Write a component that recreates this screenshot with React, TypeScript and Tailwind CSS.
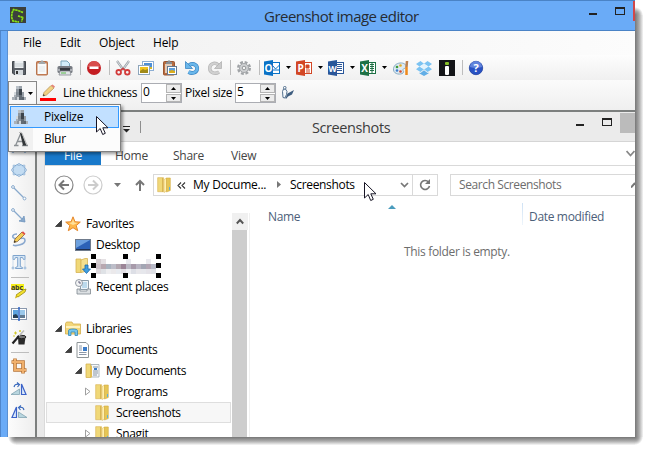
import React from "react";

type Kids = { children?: React.ReactNode };

function Ico({ children, w = 16, h = 16, c = "" }: Kids & { w?: number; h?: number; c?: string }) {
  return (
    <svg width={w} height={h} viewBox={`0 0 ${w} ${h}`} className={`block shrink-0 ${c}`}>
      {children}
    </svg>
  );
}

const Sep = ({ c = "" }: { c?: string }) => <div className={`h-[15px] w-px shrink-0 bg-[#bdbdbd] ${c}`} />;

const Caret = ({ c = "" }: { c?: string }) => (
  <Ico w={5} h={3} c={c}>
    <path d="M0 0h5L2.5 3z" fill="#000" />
  </Ico>
);

const Logo = () => (
  <Ico>
    <rect width="16" height="16" fill="#3b3f3d" />
    <path d="M13 5.500L8 3.500 3.500 2.500 2 6 1.500 10l1.500 4 6 1M8 9l5 1.500-1.500 4" fill="none" stroke="#5f9c1c" strokeWidth="1.600" />
    <path d="M13 5.500L8 3.500 3.500 2.500 2 6 1.500 10l1.500 4 6 1M8 9l5 1.500-1.500 4" fill="none" stroke="#8be01a" strokeWidth="1.500" strokeDasharray="2 1" />
  </Ico>
);

const Save = () => (
  <Ico>
    <path d="M1.5 1.5h13v13H3l-1.500-1.500z" fill="#5a5f66" stroke="#43484e" />
    <rect x="3.500" y="1" width="9" height="7" fill="#eef1f3" />
    <path d="M4 4h8M4 6h8" stroke="#c4ccd0" />
    <rect x="4" y="10" width="8" height="5" fill="#d5dade" />
    <rect x="5" y="11" width="2" height="3" fill="#333" />
  </Ico>
);

const Clip = () => (
  <Ico>
    <rect x="2.500" y="1.500" width="11" height="13.500" rx="1" fill="#c9835b" stroke="#b8734c" />
    <path d="M3.500 3.500h9v10.500h-9z" fill="#f8fafb" />
    <path d="M5 4h6V2H9.500L9 .5H7L6.500 2H5z" fill="#a3a8ab" />
    <path d="M5 7h6M5 9h6M5 11h6" stroke="#e4e8ea" />
  </Ico>
);

const Printer = () => (
  <Ico>
    <path d="M4 1h6l2.500 2.500V7H4z" fill="#d3edf9" stroke="#7ba6ba" />
    <rect x=".5" y="6" width="15" height="7" rx="1.500" fill="#777b82" />
    <path d="M1 9h14v2H1z" fill="#a9acb2" />
    <rect x="3" y="8" width="10" height="3" fill="#34383e" />
    <path d="M3 11h10l1 4H2z" fill="#dfe3e6" stroke="#85898f" strokeWidth=".8" />
    <path d="M4 13h5" stroke="#57b848" />
  </Ico>
);

const Delete = () => (
  <Ico>
    <circle cx="8" cy="8" r="7" fill="#c41d22" />
    <path d="M2 7a6 6 0 0 1 12 0z" fill="#dd5a58" opacity=".8" />
    <rect x="3.500" y="6.500" width="9" height="2.500" fill="#fff" />
  </Ico>
);

const Scissors = () => (
  <Ico>
    <path d="M2 1l6.500 9M14 1L7.500 10" stroke="#9ba2a8" strokeWidth="2.200" />
    <path d="M2 1l5 7M14 1L9 8" stroke="#e7eaec" strokeWidth=".8" />
    <circle cx="3.700" cy="12.300" r="2.300" fill="none" stroke="#d23a3a" strokeWidth="1.800" />
    <circle cx="12.300" cy="12.300" r="2.300" fill="none" stroke="#d23a3a" strokeWidth="1.800" />
    <path d="M5.500 10.500l2.500-2 2.500 2" stroke="#d23a3a" strokeWidth="1.500" fill="none" />
  </Ico>
);

const Copy = () => (
  <Ico>
    <rect x="4.500" y="1.500" width="11" height="9" fill="#fff" stroke="#8caed4" />
    <rect x="6" y="3" width="8" height="6" fill="#4e8fd6" />
    <rect x="6" y="7" width="8" height="2" fill="#d8b830" />
    <rect x=".5" y="5.500" width="11" height="9" fill="#fff" stroke="#8ea6bc" />
    <rect x="2" y="7" width="8" height="6" fill="#f0c31f" />
    <path d="M2 11l3-2 2 1 3-1v4H2z" fill="#a08a18" />
  </Ico>
);

const Paste = () => (
  <Ico>
    <rect x="2.500" y="1.500" width="11" height="13.500" rx="1" fill="#b56b40" stroke="#9a5530" />
    <rect x="4" y="4" width="7" height="9" fill="#e4ccb8" />
    <path d="M5 4h6V2H9.500L9 .5H7L6.500 2H5z" fill="#888d91" />
    <rect x="6.500" y="6.500" width="9" height="8" fill="#fff" stroke="#637991" />
    <rect x="8" y="8" width="6" height="5" fill="#5d9edb" />
    <path d="M8 11l3-1 3 1v2H8z" fill="#dbac1b" />
  </Ico>
);

const Undo = () => (
  <Ico>
    <path d="M5 5.200c5-3 9 .5 8 4.500-.8 3-5 4.300-8.500 2.300" fill="none" stroke="#3b86c4" strokeWidth="3.800" />
    <path d="M5 5.200c5-3 9 .5 8 4.500-.8 3-5 4.300-8.500 2.300" fill="none" stroke="#69b6ea" strokeWidth="2.600" />
    <path d="M1.500 1.500v7h7z" fill="#69b6ea" stroke="#3b86c4" strokeWidth=".8" />
  </Ico>
);

const Redo = () => (
  <Ico>
    <path d="M11.500 5C7.500 1.500 2.500 4 2.700 8.500c.2 4.500 5.500 6 9.300 3.500" fill="none" stroke="#b3b3b3" strokeWidth="3.400" />
    <path d="M11.500 5C7.500 1.500 2.500 4 2.700 8.500c.2 4.500 5.500 6 9.300 3.500" fill="none" stroke="#d0d0d0" strokeWidth="2.200" />
    <path d="M14.500 1.500v7h-7z" fill="#cacaca" stroke="#b3b3b3" strokeWidth=".8" />
  </Ico>
);

const Gear = () => (
  <Ico>
    <circle cx="8" cy="8" r="5.800" fill="none" stroke="#a0a3a6" strokeWidth="2.400" strokeDasharray="2.800 1.750" />
    <circle cx="8" cy="8" r="4.500" fill="#cfd1d3" stroke="#a2a5a8" strokeWidth="1" />
    <circle cx="8" cy="8" r="1.800" fill="#f5f5f5" stroke="#95989a" />
  </Ico>
);

function Office({ color, letter, kind }: { color: string; letter: string; kind: "o" | "p" | "w" | "x" }) {
  return (
    <Ico>
      <rect x="7.500" y="2.500" width="8" height="11" fill="#fff" stroke={color} />
      {kind === "o" && <path d="M9 6l2.500 3L16 4.500M9 10h6" stroke={color} fill="none" />}
      {kind === "p" && <path d="M10 5h3v3h-3zM10 10h4M10 12h4" fill={color} stroke={color} />}
      {kind === "w" && <path d="M9 4.500h5M9 6.500h5M9 8.500h5M9 10.500h5" stroke={color} />}
      {kind === "x" && <path d="M10 4.500h4M10 6.500h4M10 8.500h4M10 10.500h4M12 3v10" stroke={color} />}
      <path d="M0 1.500L9 0v16l-9-1.500z" fill={color} />
      <text x="4.600" y="11.700" textAnchor="middle" fontSize={letter === "W" ? 8.500 : 10} fontWeight="bold" fill="#fff" fontFamily="Open Sans, sans-serif" letterSpacing="0">
        {letter}
      </text>
    </Ico>
  );
}

const Palette = () => (
  <Ico>
    <path d="M7 3c4-.5 7 2 6 4.500-.6 1.400-2.500.5-3 2-.4 1.600 1.600 1.500 0 3.500-2 2-9 1.500-9.500-3C.2 6 3 3.400 7 3z" fill="#dceaf2" stroke="#7fa5bd" strokeWidth=".9" />
    <circle cx="4" cy="7" r="1.300" fill="#3d9b3b" />
    <circle cx="7.500" cy="5.500" r="1.300" fill="#e5ac26" />
    <circle cx="4" cy="10.500" r="1.300" fill="#3f7fce" />
    <circle cx="7.500" cy="11.500" r="1.300" fill="#d04b35" />
    <path d="M14 1l-.5 6" stroke="#bb8151" strokeWidth="2.500" />
    <path d="M13.500 7v8" stroke="#ee8a1d" strokeWidth="2.500" />
  </Ico>
);

const Dropbox = () => (
  <Ico>
    <path d="M4.500 1L8 3.800 3.500 6.500 0 4zM11.500 1L8 3.800l4.500 2.700L16 4zM0 9.200l3.500-2.700L8 9.200 4.500 12zM16 9.200l-3.500-2.700L8 9.200l3.500 2.800z" fill="#7cc3f2" />
    <path d="M3.500 12.500l1 .6L8 10.300l3.500 2.800 1-.6v1L8 16l-4.500-2.500z" fill="#62aee6" />
    <path d="M8 3.800l4.500 2.700L8 9.200 3.500 6.500z" fill="#e3f3fd" />
  </Ico>
);

const Imgur = () => (
  <Ico>
    <rect width="16" height="16" fill="#141518" />
    <rect x="6" y="6" width="4" height="9" rx="1" fill="#fff" />
    <rect x="6" y="2" width="4" height="3" rx="1" fill="#85bf25" />
  </Ico>
);

const Help = () => (
  <Ico>
    <circle cx="8" cy="8" r="6.700" fill="#2952c4" stroke="#2141a0" strokeWidth=".8" />
    <path d="M2 7a6 6 0 0 1 12 0q-6 2-12 0z" fill="#7394e4" opacity=".75" />
    <text x="8" y="12" textAnchor="middle" fontSize="11" fontWeight="bold" fill="#fff" fontFamily="Open Sans, sans-serif" letterSpacing="0">?</text>
  </Ico>
);

const PixelA = () => (
  <Ico>
    <path d="M5 1h3v3H5z" fill="#b9c0c7" />
    <path d="M8 1h3v3H8z" fill="#9aa2aa" />
    <path d="M5 4h3v3H5z" fill="#8e969e" />
    <path d="M8 4h3v6H8z" fill="#3c444c" />
    <path d="M3 7h2v3H3z" fill="#d3d8dc" />
    <path d="M5 7h3v3H5z" fill="#7f8890" />
    <path d="M11 7h2v5h-2z" fill="#969ea6" />
    <path d="M3 10h2v2H3z" fill="#a9b0b7" />
    <path d="M5 10h3v2H5z" fill="#8b939b" />
    <path d="M8 10h3v5H8z" fill="#626b74" />
    <path d="M1 12h3v3H1z" fill="#aab1b8" />
    <path d="M4 12h2v3H4z" fill="#8b939b" />
    <path d="M6 12h2v3H6z" fill="#d0d5d9" />
    <path d="M11 12h2v3h-2z" fill="#5c656e" />
    <path d="M13 12h2v3h-2z" fill="#a9b0b7" />
  </Ico>
);

const BlurA = () => (
  <Ico>
    <path d="M1 14.500h4.500M9 14.500h6M2.800 14L7.500 3M4.500 10.500h5" stroke="#8a8f93" strokeWidth="1.300" fill="none" />
    <path d="M7 2h1.500l5 12.500H10z" fill="#303437" />
    <path d="M6 2l1-1 2 1 5 12" stroke="#aaa" strokeWidth=".8" fill="none" />
  </Ico>
);

const PencilRed = () => (
  <Ico w={17} h={18}>
    <path d="M3 12l1-3.500L11 1.500l3 2.500-7.500 7z" fill="#f2d283" stroke="#b7955a" strokeWidth=".8" />
    <path d="M11 1.500l1.500-1 2.500 2-1 1.500z" fill="#e68478" />
    <path d="M3 12l.5-2 1.500 1.500z" fill="#333" />
    <rect x="0" y="14" width="16" height="3" fill="#f00" />
  </Ico>
);

function Spinner({ value, c }: { value: string; c: string }) {
  return (
    <div className={`flex h-[20px] w-[41px] shrink-0 border border-[#abadb3] bg-white ${c}`}>
      <span className="w-[24px] pl-[1px] text-[12px] leading-[16px] text-black">{value}</span>
      <div className="flex w-[15px] flex-col gap-px bg-white">
        <div className="flex h-[9px] items-center justify-center border border-[#b4b4b4] bg-[#ececec]">
          <Ico w={5} h={3}><path d="M0 3h5L2.500 0z" fill="#000" /></Ico>
        </div>
        <div className="flex h-[8px] items-center justify-center border border-[#b4b4b4] bg-[#ececec]">
          <Caret />
        </div>
      </div>
    </div>
  );
}

const Pen = () => (
  <Ico w={14} h={16}>
    <path d="M2 12.500l-.5-6L2.500 4h2l1.500 2.500-.5 3-1.500 3.500z" fill="#f5f9fc" stroke="#526f8e" />
    <rect x="2.500" y="1.500" width="2.500" height="2.500" rx="1" fill="#fff" stroke="#526f8e" />
    <path d="M4.500 13.500l2-5L13 5l-2 4.500-4 2-2 2.500z" fill="#3f5e80" />
  </Ico>
);

const EllipseTool = () => (
  <Ico>
    <ellipse cx="8" cy="8" rx="6.500" ry="5.500" fill="#c3dcf2" stroke="#7ca6cf" />
    {[[1.500, 8], [14.500, 8], [8, 2.500], [8, 13.500], [3, 4], [13, 4], [3, 12], [13, 12]].map(([x, y], i) => (
      <circle key={i} cx={x} cy={y} r="1" fill="#fff" stroke="#7ca6cf" strokeWidth=".8" />
    ))}
  </Ico>
);

const LineTool = ({ arrow = false }: { arrow?: boolean }) => (
  <Ico>
    <path d="M3 3l10 10" stroke="#88a9cc" strokeWidth="1.300" />
    <circle cx="2" cy="2" r="1.400" fill="#fff" stroke="#88a9cc" />
    {arrow ? <path d="M13 8l1 6-6-1 3-1.500z" fill="#88a9cc" stroke="#6e94bd" strokeWidth=".8" /> : <circle cx="13.500" cy="13.500" r="1.400" fill="#fff" stroke="#88a9cc" />}
  </Ico>
);

const Freehand = () => (
  <Ico>
    <path d="M6 3C1 3 .5 7 4 7.500c5 .5 10-2 10 2 0 4-9 6-12 4.500" fill="none" stroke="#8ba9cf" strokeWidth="1.600" />
    <path d="M3 11.500l1-3.500 7-7 2.500 2.500-7 7z" fill="#f4cc56" stroke="#85653b" strokeWidth=".8" />
    <path d="M10.500 1.500l1.500-1.200 2.500 2.500-1.200 1.200z" fill="#e05048" />
    <path d="M3 11.500l.6-2 1.400 1.400z" fill="#222" />
  </Ico>
);

const TextTool = () => (
  <Ico>
    <path d="M2 1.500h12v4h-1.500l-1-2H9.300v9l2.200 1v1h-7v-1l2.200-1v-9H4.500l-1 2H2z" fill="#d6e6f5" stroke="#7fa4cd" />
    <path d="M2 1.500v12.500M14 5v9" stroke="#b8cee5" strokeWidth=".7" />
    <circle cx="2" cy="14" r="1" fill="#fff" stroke="#7fa4cd" strokeWidth=".8" />
    <circle cx="14" cy="14" r="1" fill="#fff" stroke="#7fa4cd" strokeWidth=".8" />
  </Ico>
);

const Highlight = () => (
  <Ico>
    <rect y="1" width="13" height="6" fill="#f5ed18" />
    <text x="0" y="6.500" fontSize="7" fontWeight="bold" textLength="12" fill="#333" fontFamily="Open Sans, sans-serif" letterSpacing="0">abc</text>
    <path d="M5 12l7-5 3-1-1 3-7 5z" fill="#f3e12b" stroke="#99891b" strokeWidth=".8" />
    <path d="M5 12l2 2-3 1.500z" fill="#d3b70f" />
  </Ico>
);

const Obfuscate = () => (
  <Ico>
    <rect x=".5" y="2.500" width="15" height="11" fill="#fff" stroke="#8a98ad" />
    <rect x="2" y="4" width="5" height="8" fill="#5da2de" />
    <path d="M2 9l3-1 2 2v2H2z" fill="#273e55" />
    <rect x="9" y="4" width="5" height="8" fill="#9bc8ea" />
    <rect x="9" y="9" width="5" height="3" fill="#617a91" />
    <path d="M8 1v14" stroke="#2b63c7" strokeWidth="1.500" />
  </Ico>
);

const Wand = () => (
  <Ico>
    <path d="M7 8h7.500l-1 7.500H7.500z" fill="#2b2b2b" />
    <ellipse cx="10.500" cy="8" rx="4.500" ry="1.700" fill="#777" stroke="#222" />
    <path d="M1.500 14.500L8 7" stroke="#222" strokeWidth="2.200" />
    <path d="M8 7l5-5.500" stroke="#bbb" strokeWidth="1.500" />
    <path d="M3 4h3M4.500 2.500v3M8 2h2M9 1v2M2 7h2" stroke="#d2c92a" />
  </Ico>
);

const Crop = () => (
  <Ico>
    <path d="M4 .5v11.500h11.500M.5 4H12v11.500" fill="none" stroke="#b87638" strokeWidth="3.600" />
    <path d="M4 1v11h11M1 4h11v11" fill="none" stroke="#f0b06c" strokeWidth="2" />
  </Ico>
);

const Rotate = ({ flip = false }: { flip?: boolean }) => (
  <Ico c={flip ? "-scale-x-100" : ""}>
    <path d="M0 13.500h8.500V8z" fill="#b9d6df" stroke="#83a5b3" strokeWidth=".8" />
    <path d="M10.500 3v10.500h4.500z" fill="#dceafa" stroke="#3b62c8" strokeWidth="1.200" />
    <path d="M3 6c.5-2 2.500-3 4.500-2.500M6 1.500l2.500 2L6.500 6" fill="none" stroke="#3465ba" strokeWidth="1.100" />
  </Ico>
);

const FolderIco = () => (
  <svg width={14} height={16} viewBox="0 0 14 16" className="block shrink-0">
    <path d="M.7.700h5.800v14H.7z" fill="#f0d878" stroke="#dcb95a" strokeWidth=".7" />
    <path d="M7 2.500L9.500 1v13L7 15.500z" fill="#fff0b0" stroke="#dfbd62" strokeWidth=".6" />
    <path d="M9.500 1h3.800v12.500L9.500 15z" fill="#e6c655" stroke="#d3ab42" strokeWidth=".6" />
    <path d="M5.500 1v14" stroke="#d8b653" />
    <path d="M12.500 10v3" stroke="#5cb0de" />
  </svg>
);

const Star = () => (
  <Ico>
    <path d="M8 .8l2 5 5.300.3-4.100 3.400 1.500 5.200L8 11.700l-4.700 3 1.500-5.200L.7 6.100 6 5.800z" fill="#ffb84a" stroke="#e5872c" />
    <path d="M8 3l1.200 3.500 3.500.4L8 9 4 7l3-.7z" fill="#ffe09a" />
  </Ico>
);

const DesktopIco = () => (
  <Ico>
    <rect x=".5" y="2.500" width="15" height="11" fill="#2c62b7" stroke="#6f7b8c" />
    <path d="M1 3h14L1 11z" fill="#6da1df" />
    <path d="M1 12.500h14" stroke="#20304f" />
  </Ico>
);

const DownloadIco = () => (
  <Ico>
    <path d="M1 1h5v13.500H1z" fill="#f0d878" stroke="#d6b353" strokeWidth=".8" />
    <path d="M6 2l4-1.500h2.500V13L6 14.500z" fill="#f4df8f" stroke="#d6b353" strokeWidth=".8" />
    <path d="M10 7h3v4h2.500l-4 4.500L7.500 11H10z" fill="#3f9ee0" stroke="#1968a9" strokeWidth=".8" />
  </Ico>
);

const RecentIco = () => (
  <Ico>
    <path d="M5.500 1.500h8v9h-8z" fill="#eef5f9" stroke="#8b9ca8" />
    <path d="M7 4h5M7 6h5M7 8h5" stroke="#88bede" />
    <circle cx="4" cy="4" r="3.500" fill="#f3f4f5" stroke="#7d8790" strokeWidth=".8" />
    <path d="M4 2v2h2" fill="none" stroke="#446" strokeWidth=".8" />
    <path d="M2 10h3v2h7v-2h3.500v5H2z" fill="#dce0e3" stroke="#7f888f" strokeWidth=".8" />
  </Ico>
);

const LibIco = () => (
  <Ico>
    <path d="M.5 13V2.500L1.500 1H7l1 2h7.500v10z" fill="#f3d77a" stroke="#d3ad4c" strokeWidth=".8" />
    <path d="M1 5h14v2H1z" fill="#fff2bd" />
    <path d="M3.500 14.500V9.500c0-2 9-2 9 0v5H10V11H6v3.500z" fill="#75c5ed" stroke="#3488b8" strokeWidth=".8" />
  </Ico>
);

const DocIco = () => (
  <Ico>
    <path d="M2 .5h9l2.500 2.500v12.500H2z" fill="#fff" stroke="#8d9497" />
    <path d="M4 4h3M4 6h3M4 8h3M4 10.500h7.500M4 12.500h7.500" stroke="#8c98a8" />
    <path d="M8 5h4v4H8z" fill="#3a7bc8" />
  </Ico>
);

const MyDocIco = () => (
  <Ico>
    <path d="M1 1h5v13.500H1z" fill="#f0d878" stroke="#d6b353" strokeWidth=".8" />
    <path d="M6 1.500h8v12.500H6z" fill="#f7f9fb" stroke="#9da7ae" strokeWidth=".8" />
    <path d="M8 4h5M8 8h5M8 10h5M8 12h4" stroke="#8794a2" />
    <path d="M9 5h3v2H9z" fill="#3a7bc8" />
    <path d="M5 2l2 1v11l-2 1z" fill="#e3be53" />
  </Ico>
);

function Row({ indent, tw, icon, label, sel = false }: { indent: string; tw?: "open" | "closed"; icon: React.ReactNode; label?: string; sel?: boolean }) {
  return (
    <div className={`flex h-[21px] shrink-0 items-center border ${sel ? "border-[#dedede] bg-[#f7f7f7]" : "border-transparent"}`}>
      <div className={`shrink-0 ${indent}`} />
      <div className="w-[10px] shrink-0">
        {tw === "open" && <Ico w={7} h={7}><path d="M6.500.5v6h-6z" fill="#404040" stroke="#262626" strokeWidth=".7" /></Ico>}
        {tw === "closed" && <Ico w={6} h={9}><path d="M.5 1v7L5 4.500z" fill="#fff" stroke="#a0a0a0" /></Ico>}
      </div>
      <div className="w-[21px] shrink-0">{icon}</div>
      <span className="whitespace-nowrap pt-px leading-[18px]">{label}</span>
    </div>
  );
}

const Cursor = ({ c }: { c: string }) => (
  <Ico w={13} h={20} c={`absolute ${c}`}>
    <path d="M.5.5v15.500l3.700-3.500 2.500 6 2.600-1.200-2.500-5.500h5.200z" fill="#fff" stroke="#171525" />
  </Ico>
);

const MOSAIC = [
  ["#d2cbcf", "#e4e0e3", "#fff", "#fff", "#fff", "#fff", "#e8e8ee", "#fff", "#fff", "#fff", "#e9e9ee", "#fff"],
  ["#c9bfc6", "#b8a8b0", "#a9b3bf", "#bdbec9", "#b3a7b0", "#9b8497", "#bab8c4", "#a79aaa", "#b8b4c2", "#a3a6b4", "#b2a5b3", "#b6b8c6"],
  ["#dcd8dc", "#dfe2e6", "#eeeef0", "#ebe9eb", "#e8ebf0", "#e2dfe5", "#eeeef2", "#dddfe6", "#e8e7eb", "#e6e7ec", "#e4e2e8", "#dee0e6"],
];

export default function App() {
  return (
    <div className="relative h-[452px] w-[650px] overflow-hidden bg-white font-['Open_Sans','Noto_Sans',sans-serif] text-[12px] tracking-[-0.330px] text-black">
      <div className="absolute left-[635px] top-[15px] h-[422px] w-[8px] bg-linear-to-r from-[#777] via-[#aaa] to-[#f4f4f4]" />
      <div className="absolute left-[16px] top-[437px] h-[8px] w-[619px] bg-linear-to-b from-[#777] via-[#aaa] to-[#f8f8f8]" />
      <div className="absolute left-[635px] top-[7px] size-[8px] bg-[radial-gradient(circle_at_bottom_left,#777,#aaa_4px,#fff_8px)]" />
      <div className="absolute left-[635px] top-[437px] size-[8px] bg-[radial-gradient(circle_at_top_left,#777,#aaa_4px,#fff_8px)]" />
      <div className="absolute left-[8px] top-[437px] size-[8px] bg-[radial-gradient(circle_at_top_right,#777,#aaa_4px,#fff_8px)]" />

      <div className="relative flex h-[437px] w-[635px] flex-col overflow-hidden bg-[#f5f5f5]">
        <header className="flex h-[31px] shrink-0 border-y border-[#4a83c6] bg-[#6aabf7]">
          <div className="w-[264px] pl-[10px] pt-[6px]"><Logo /></div>
          <h1 className="w-[325px] whitespace-nowrap text-[15px] leading-[30px] tracking-[-0.520px] text-[#262b33]">Greenshot image editor</h1>
          <div className="mt-[12px] h-[2px] w-[8px] bg-[#222]" />
          <div className="ml-[18px] mt-[6px] h-[8px] w-[10px] border border-t-2 border-[#222]" />
          <div className="ml-[8px] h-[20px] w-[2px] bg-[#d1484a]" />
        </header>

        <div className="flex min-h-0 flex-1">
          <div className="w-[8px] shrink-0 border-x border-l-[#4f86cc] border-r-[#5a90d2] bg-[#6aabf7]" />
          <div className="flex w-[627px] flex-col">
            <nav className="flex h-[24px] shrink-0 bg-linear-to-r from-[#f0f0f0] to-[#fcfcfc] leading-[24px] tracking-[-0.150px]">
              <span className="ml-[15px] w-[37px]">File</span>
              <span className="w-[39px]">Edit</span>
              <span className="w-[54px]">Object</span>
              <span>Help</span>
            </nav>
            <div className="flex h-[25px] shrink-0 items-center bg-linear-to-b from-[#fdfdfd] to-[#f0f0f0] pl-[3px]">
              <div className="flex items-center gap-[7px]"><Save /><Clip /><Printer /><Sep /></div>
              <div className="ml-[5px] flex items-center gap-[7px]"><Delete /><Sep /></div>
              <div className="ml-[5px] flex items-center gap-[7px]"><Scissors /><Copy /><Paste /><Undo /><Redo /><Sep /></div>
              <div className="ml-[5px] flex items-center gap-[7px]"><Gear /><Sep /></div>
              <div className="ml-[4px] flex items-center">
                <Office color="#0a72c6" letter="O" kind="o" /><Caret c="ml-[6px] mr-[5px]" />
                <Office color="#d24625" letter="P" kind="p" /><Caret c="ml-[6px] mr-[5px]" />
                <Office color="#2a5699" letter="W" kind="w" /><Caret c="ml-[6px] mr-[5px]" />
                <Office color="#1e7145" letter="X" kind="x" /><Caret c="ml-[6px] mr-[6px]" />
              </div>
              <div className="flex items-center gap-[7px]"><Palette /><Dropbox /><Imgur /><Sep /></div>
              <div className="ml-[5px]"><Help /></div>
            </div>
            <div className="flex h-[30px] shrink-0 bg-linear-to-b from-[#fbfbfb] to-[#efefef]">
              <div className="mt-px flex h-[29px] w-[29px] border border-[#888] bg-[#f8f8f8] pl-[2px] pt-[3px]">
                <PixelA /><Caret c="mt-[7px] ml-px" />
              </div>
              <div className="ml-[3px] mt-[4px]"><PencilRed /></div>
              <span className="ml-[6px] w-[78px] whitespace-nowrap leading-[26px]">Line thickness</span>
              <Spinner value="0" c="mt-[3px]" />
              <span className="ml-[3px] w-[50px] whitespace-nowrap leading-[26px]">Pixel size</span>
              <Spinner value="5" c="mt-[3px]" />
              <div className="ml-[5px] mt-[5px]"><Pen /></div>
            </div>

            <div className="flex min-h-0 flex-1">
              <aside className="flex w-[27px] shrink-0 flex-col bg-linear-to-r from-[#fcfcfc] to-[#eeeeee] pl-[3px]">
                <div className="mt-[29px] flex flex-col gap-[7px]">
                  <Ico><rect x="1.500" y="2.500" width="13" height="10" fill="#bcd7ef" stroke="#7ca6cf" /><circle cx="2" cy="12.500" r="1" fill="#fff" stroke="#7ca6cf" /><circle cx="14" cy="12.500" r="1" fill="#fff" stroke="#7ca6cf" /></Ico>
                  <EllipseTool /><LineTool /><LineTool arrow /><Freehand /><TextTool />
                </div>
                <div className="mt-[7px] h-px w-[18px] bg-[#bdbdbd]" />
                <div className="mt-[5px] flex flex-col gap-[7px]"><Highlight /><Obfuscate /><Wand /></div>
                <div className="mt-[7px] h-px w-[18px] bg-[#bdbdbd]" />
                <div className="mt-[5px] flex flex-col gap-[7px]"><Crop /><Rotate /><Rotate flip /></div>
              </aside>

              <main className="flex min-w-0 flex-1 border-l-2 border-t-2 border-[#7c7f7e] bg-[#e9e9e9]">
                <div className="w-[8px] shrink-0 border-r border-[#dadada]" />
                <section className="flex w-[590px] flex-col bg-white">
                  <div className="flex h-[30px] shrink-0 border-b border-[#d5d5d5] bg-[#ebebeb]">
                    <Ico w={7} h={7} c="ml-[78px] mt-[14px]"><path d="M0 .5h7" stroke="#222" /><path d="M0 3h7L3.500 6.500z" fill="#222" /></Ico>
                    <div className="ml-[10px] mt-[9px] h-[12px] w-px bg-[#8e8e8e]" />
                    <h2 className="ml-[171px] w-[264px] whitespace-nowrap text-[14.500px] leading-[31px] tracking-[-0.400px] text-[#3c3c3c]">Screenshots</h2>
                    <div className="mt-[12px] h-[2px] w-[8px] bg-[#222]" />
                    <div className="ml-[18px] mt-[6px] h-[8px] w-[10px] border border-t-2 border-[#222]" />
                    <div className="ml-[8px] mt-px h-[20px] w-[15px] bg-[#bbb]" />
                  </div>
                  <div className="flex h-[24px] shrink-0 border-b border-[#d9d9d9] leading-[27px] tracking-[-0.250px] text-[#444]">
                    <div className="w-[56px] bg-[#1979ca] pl-[19px] text-white">File</div>
                    <span className="ml-[14px] w-[58px]">Home</span>
                    <span className="w-[58px]">Share</span>
                    <span className="w-[395px]">View</span>
                    <Ico w={9} h={7} c="mt-[8px]"><path d="M.5 1L4.500 5.500 8.500 1" fill="none" stroke="#888" strokeWidth="1.800" /></Ico>
                  </div>
                  <div className="flex h-[37px] shrink-0 items-center">
                    <Ico w={20} h={20} c="ml-[9px]"><circle cx="10" cy="10" r="9" fill="#fff" stroke="#888" strokeWidth="1.200" /><path d="M15 10H6M10 5.500L5.500 10l4.500 4.500" fill="none" stroke="#777" strokeWidth="2" /></Ico>
                    <Ico w={20} h={20} c="ml-[9px]"><circle cx="10" cy="10" r="9" fill="#fff" stroke="#ccc" strokeWidth="1.200" /><path d="M5 10h9M10 5.500l4.500 4.500-4.500 4.500" fill="none" stroke="#ccc" strokeWidth="2" /></Ico>
                    <Ico w={7} h={4} c="ml-[11px]"><path d="M0 0h7L3.500 4z" fill="#777" /></Ico>
                    <Ico w={10} h={12} c="ml-[14px]"><path d="M5 12V2M1 6l4-4 4 4" fill="none" stroke="#777" strokeWidth="2" /></Ico>
                    <div className="ml-[8px] flex h-[22px] w-[285px] shrink-0 items-center border border-[#d9d9d9]">
                      <div className="ml-[3px] w-[20px]"><FolderIco /></div>
                      <Ico w={9} h={7} c="mt-px"><path d="M4 .5l-3 3 3 3M8 .5l-3 3 3 3" fill="none" stroke="#333" strokeWidth="1.100" /></Ico>
                      <span className="ml-[7px] w-[84px] whitespace-nowrap tracking-[-0.250px]">My Docume...</span>
                      <Ico w={4} h={7}><path d="M0 0v7l4-3.500z" fill="#777" /></Ico>
                      <span className="ml-[9px] w-[110px] whitespace-nowrap">Screenshots</span>
                      <Ico w={9} h={6}><path d="M1 1l3.500 3.500L8 1" fill="none" stroke="#777" strokeWidth="1.700" /></Ico>
                      <div className="ml-[3px] h-[20px] w-px bg-[#d9d9d9]" />
                      <Ico w={12} h={13} c="ml-[6px]"><path d="M9.500 4A4.500 4.500 0 1 0 10.500 8" fill="none" stroke="#777" strokeWidth="1.600" /><path d="M11 1v5H6z" fill="#777" /></Ico>
                    </div>
                    <div className="ml-[12px] flex h-[22px] w-[185px] shrink-0 items-center border border-r-0 border-[#d9d9d9] pl-[8px]">
                      <span className="w-[172px] whitespace-nowrap tracking-[-0.400px] text-[#6d6d6d]">Search Screenshots</span>
                      <Ico w={4} h={6}><path d="M0 5.500L4 1" stroke="#777" strokeWidth="2" /></Ico>
                    </div>
                  </div>

                  <div className="flex min-h-0 flex-1">
                    <div className="flex w-[187px] shrink-0 flex-col overflow-hidden pl-px pr-px pt-[10px]">
                      <Row indent="w-[8px]" tw="open" icon={<Star />} label="Favorites" />
                      <Row indent="w-[18px]" icon={<DesktopIco />} label="Desktop" />
                      <Row indent="w-[18px]" icon={<DownloadIco />} />
                      <Row indent="w-[18px]" icon={<RecentIco />} label="Recent places" />
                      <div className="h-[21px] shrink-0" />
                      <Row indent="w-[8px]" tw="open" icon={<LibIco />} label="Libraries" />
                      <Row indent="w-[18px]" tw="open" icon={<DocIco />} label="Documents" />
                      <Row indent="w-[28px]" tw="open" icon={<MyDocIco />} label="My Documents" />
                      <Row indent="w-[38px]" tw="closed" icon={<FolderIco />} label="Programs" />
                      <Row indent="w-[38px]" icon={<FolderIco />} label="Screenshots" sel />
                      <Row indent="w-[38px]" tw="closed" icon={<FolderIco />} label="Snagit" />
                    </div>
                    <div className="mt-[10px] flex w-[18px] shrink-0 flex-col border-r border-[#f0f0f0]">
                      <div className="flex h-[17px] w-[16px] shrink-0 items-center justify-center bg-[#f0f0f0]">
                        <Ico w={8} h={7}><path d="M.8 5.500L4 2l3.200 3.500" fill="none" stroke="#555" strokeWidth="1.900" /></Ico>
                      </div>
                      <div className="w-[15px] flex-1 bg-[#cdcdcd]" />
                    </div>
                    <div className="flex w-[385px] flex-col">
                      <div className="flex h-[26px] shrink-0 leading-[27px] text-[#4c607a]">
                        <span className="ml-[18px] w-[120px]">Name</span>
                        <Ico w={8} h={4} c="mt-[2px]"><path d="M0 4h8L4 0z" fill="#4a9cbd" /></Ico>
                        <div className="ml-[126px] h-[22px] w-px bg-linear-to-b from-[#cfe2f5] to-[#eef5fb]" />
                        <span className="ml-[6px] whitespace-nowrap">Date modified</span>
                      </div>
                      <p className="ml-[154px] mt-[14px] whitespace-nowrap leading-[18px] text-[#6d6d6d]">This folder is empty.</p>
                    </div>
                  </div>
                </section>
              </main>
            </div>
          </div>
        </div>

        <div className="absolute left-[96px] top-[259px] grid grid-cols-12">
          {MOSAIC.flat().map((m, i) => (
            <div key={i} className="h-[5px] w-[5px]" style={{ background: m }} />
          ))}
        </div>
        {["left-[91px] top-[254px]", "left-[91px] top-[263px]", "left-[91px] top-[273px]", "left-[123px] top-[254px]", "left-[123px] top-[273px]", "left-[156px] top-[254px]", "left-[156px] top-[263px]", "left-[156px] top-[273px]"].map((p) => (
          <div key={p} className={`absolute h-[5px] w-[5px] bg-black ${p}`} />
        ))}

        <div className="absolute left-[8px] top-[104px] flex h-[48px] w-[113px] flex-col border border-[#808080] bg-[#fcfcfc] p-px shadow-[2px_2px_3px_rgba(0,0,0,0.4)]">
          <div className="flex h-[22px] items-center border border-[#3399ff] bg-[#c2e0ff] pl-[2px]"><PixelA /><span className="ml-[15px]">Pixelize</span></div>
          <div className="flex h-[22px] items-center">
            <div className="flex h-full w-[23px] items-center bg-[#f1f1f1] pl-[3px]"><BlurA /></div>
            <span className="ml-[11px]">Blur</span>
          </div>
        </div>
        <Cursor c="left-[96px] top-[116px]" />
        <Cursor c="left-[364px] top-[182px]" />
      </div>
    </div>
  );
}
